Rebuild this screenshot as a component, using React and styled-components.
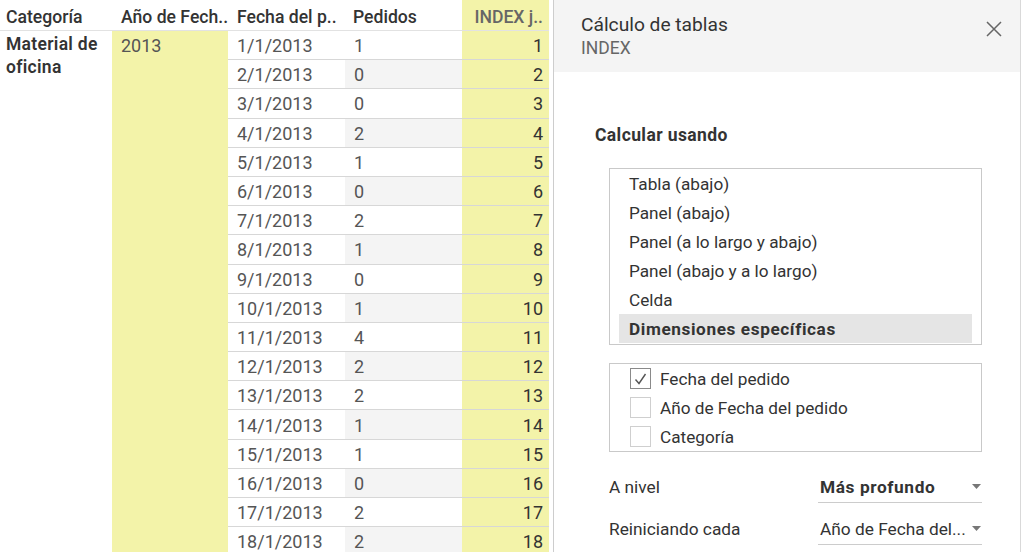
import React from "react";
import styled, { createGlobalStyle } from "styled-components";

const GlobalStyle = createGlobalStyle`
  body {
    margin: 0;
    background: #fff;
    font-family: Roboto, "Liberation Sans", sans-serif;
    color: #333;
  }
`;

const YELLOW = "#f3f3a9";

const Page = styled.div`
  display: flex;
  height: 552px;
  overflow: hidden;
`;

const Table = styled.div`
  width: 553px;
  flex: none;
  display: grid;
  grid-template-columns: 112px 116px 117px 117px 87px;
  grid-template-rows: 31px repeat(18, 29.2px);
  align-content: start;
`;

const HeadCell = styled.div`
  box-sizing: border-box;
  display: flex;
  align-items: center;
  justify-content: ${props => (props.right ? "flex-end" : "flex-start")};
  padding: 3px ${props => (props.right ? "6px" : "0")} 0 ${props => props.indent || 0}px;
  border-bottom: 1px solid #e2e2e2;
  background: ${props => (props.hilite ? YELLOW : "#fff")};
  color: ${props => (props.hilite ? "#666" : "#333")};
  font-size: 17.6px;
  font-weight: 500;
  white-space: nowrap;
  overflow: hidden;
`;

const GroupCell = styled.div`
  padding: 2px 0 0 ${props => props.indent}px;
  background: ${props => (props.hilite ? YELLOW : "#fff")};
  font-size: ${props => (props.strong ? "17.5px" : "18px")};
  font-weight: ${props => (props.strong ? 600 : 400)};
  letter-spacing: ${props => (props.strong ? "0.3px" : "0")};
  line-height: ${props => (props.strong ? "23px" : "25px")};
  color: ${props => (props.strong ? "#333" : "#555")};
`;

const Cell = styled.div`
  box-sizing: border-box;
  display: flex;
  align-items: center;
  justify-content: ${props => (props.right ? "flex-end" : "flex-start")};
  padding: 1px ${props => (props.right ? "6px" : "0")} 0 ${props => (props.right ? 0 : 9)}px;
  border-bottom: 1px solid #d7d7d7;
  background: ${props => props.bg || "#fff"};
  font-size: 18px;
  color: ${props => (props.right ? "#333" : "#555")};
`;

const Panel = styled.aside`
  box-sizing: border-box;
  width: 468px;
  flex: none;
  border-left: 1px solid #cdcdcd;
  border-right: 1px solid #d9d9d9;
  display: flex;
  flex-direction: column;
`;

const PanelHeader = styled.header`
  height: 72px;
  box-sizing: border-box;
  background: #f4f4f4;
  padding: 13px 18px 0 27px;
  display: flex;
  justify-content: space-between;
  align-items: flex-start;
`;

const Title = styled.div`
  font-size: 19.2px;
  line-height: 24px;
  color: #333;
`;

const Subtitle = styled.div`
  font-size: 17.5px;
  line-height: 22px;
  color: #666;
`;

const CloseButton = styled.button`
  border: 0;
  background: none;
  padding: 0;
  margin-top: 8px;
  width: 16px;
  height: 16px;
  display: flex;
  cursor: pointer;
`;

const PanelBody = styled.div`
  padding: 0 38px 0 41px;
`;

const SectionLabel = styled.div`
  margin-top: 52px;
  font-size: 17.5px;
  line-height: 22px;
  font-weight: 700;
  letter-spacing: 0.4px;
  color: #333;
`;

const ListBox = styled.div`
  margin: ${props => props.top}px 0 0 14px;
  border: 1px solid #c9c9c9;
  padding: ${props => (props.checks ? "0 9px 0 20px" : "0 9px 1px 9px")};
`;

const ListItem = styled.div`
  height: 29px;
  display: flex;
  align-items: center;
  gap: 9px;
  padding-left: ${props => (props.checks ? 0 : 10)}px;
  background: ${props => (props.selected ? "#e5e5e5" : "transparent")};
  font-size: 17.2px;
  font-weight: ${props => (props.selected ? 700 : 400)};
  letter-spacing: ${props => (props.selected ? "0.6px" : "0")};
  color: #333;
`;

const Box = styled.span`
  box-sizing: border-box;
  width: 21px;
  height: 21px;
  flex: none;
  border: 1px solid ${props => (props.checked ? "#8a8a8a" : "#cfcfcf")};
  display: flex;
  align-items: center;
  justify-content: center;
`;

const FieldRow = styled.div`
  margin: ${props => props.top}px 0 0 14px;
  display: grid;
  grid-template-columns: 209px 1fr;
  align-items: center;
`;

const FieldLabel = styled.span`
  font-size: 17.3px;
  color: #333;
`;

const Dropdown = styled.div`
  box-sizing: border-box;
  height: 32px;
  border-bottom: 1px solid #cccccc;
  padding: 0 1px 0 2px;
  display: flex;
  align-items: center;
  justify-content: space-between;
  font-size: 17.3px;
  font-weight: ${props => (props.strong ? 700 : 400)};
  letter-spacing: ${props => (props.strong ? "0.6px" : "0")};
  color: #333;
  white-space: nowrap;
`;

const Caret = () => (
  <svg width="9" height="5" viewBox="0 0 9 5">
    <path d="M0 0h9L4.5 5z" fill="#777" />
  </svg>
);

const orders = [1, 0, 0, 2, 1, 0, 2, 1, 0, 1, 4, 2, 2, 1, 1, 0, 2, 2];

const methods = [
  "Tabla (abajo)",
  "Panel (abajo)",
  "Panel (a lo largo y abajo)",
  "Panel (abajo y a lo largo)",
  "Celda",
  "Dimensiones específicas"
];

const dims = [
  { label: "Fecha del pedido", checked: true },
  { label: "Año de Fecha del pedido", checked: false },
  { label: "Categoría", checked: false }
];

export default function App() {
  return (
    <Page>
      <GlobalStyle />
      <Table>
        <HeadCell indent={6}>Categoría</HeadCell>
        <HeadCell indent={9}>Año de Fech..</HeadCell>
        <HeadCell indent={9}>Fecha del p..</HeadCell>
        <HeadCell indent={8}>Pedidos</HeadCell>
        <HeadCell right hilite>INDEX j..</HeadCell>

        <GroupCell strong indent={6} style={{ gridColumn: 1, gridRow: "2 / span 18" }}>
          Material de
          <br />
          oficina
        </GroupCell>
        <GroupCell hilite indent={9} style={{ gridColumn: 2, gridRow: "2 / span 18" }}>
          2013
        </GroupCell>

        {orders.map((n, i) => (
          <React.Fragment key={i}>
            <Cell style={{ gridColumn: 3 }}>{`${i + 1}/1/2013`}</Cell>
            <Cell bg={i % 2 ? "#f4f4f4" : "#fff"}>{n}</Cell>
            <Cell right bg={YELLOW}>
              {i + 1}
            </Cell>
          </React.Fragment>
        ))}
      </Table>

      <Panel>
        <PanelHeader>
          <div>
            <Title>Cálculo de tablas</Title>
            <Subtitle>INDEX</Subtitle>
          </div>
          <CloseButton aria-label="Cerrar">
            <svg width="16" height="16" viewBox="0 0 16 16">
              <path d="M1 1l14 14M15 1L1 15" stroke="#666" strokeWidth="1.5" fill="none" />
            </svg>
          </CloseButton>
        </PanelHeader>

        <PanelBody>
          <SectionLabel>Calcular usando</SectionLabel>
          <ListBox top={22}>
            {methods.map((m, i) => (
              <ListItem key={m} selected={i === methods.length - 1}>
                {m}
              </ListItem>
            ))}
          </ListBox>

          <ListBox top={18} checks>
            {dims.map(d => (
              <ListItem key={d.label} checks>
                <Box checked={d.checked}>
                  {d.checked && (
                    <svg width="13" height="12" viewBox="0 0 13 12">
                      <path d="M1.5 6.5l3.5 4L11.5 1" stroke="#555" strokeWidth="1.4" fill="none" />
                    </svg>
                  )}
                </Box>
                {d.label}
              </ListItem>
            ))}
          </ListBox>

          <FieldRow top={19}>
            <FieldLabel>A nivel</FieldLabel>
            <Dropdown strong>
              Más profundo
              <Caret />
            </Dropdown>
          </FieldRow>
          <FieldRow top={10}>
            <FieldLabel>Reiniciando cada</FieldLabel>
            <Dropdown>
              Año de Fecha del...
              <Caret />
            </Dropdown>
          </FieldRow>
        </PanelBody>
      </Panel>
    </Page>
  );
}
